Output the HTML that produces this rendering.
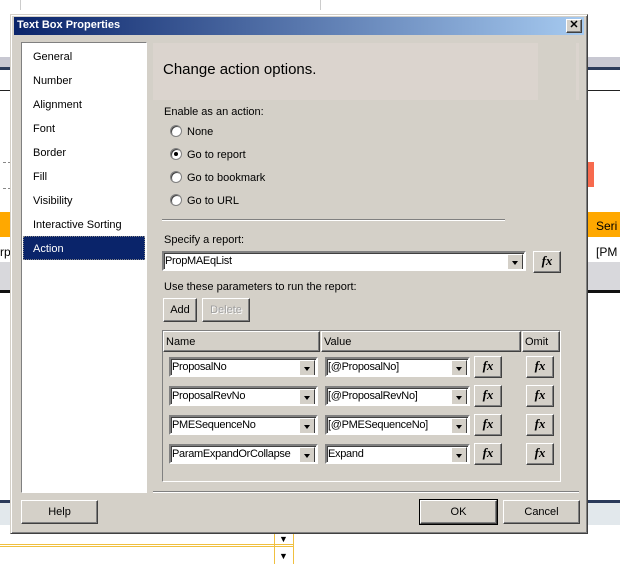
<!DOCTYPE html><html><head><style>
*{margin:0;padding:0;box-sizing:border-box}
body{width:620px;height:564px;position:relative;overflow:hidden;background:#fff;font-family:"Liberation Sans",Tahoma,sans-serif;font-size:11px;color:#000}
.a{position:absolute}
.t{position:absolute;white-space:nowrap;margin-top:1px}
.combo{position:absolute;height:20px;background:#fff;border:2px solid;border-color:#808080 #fff #fff #808080;box-shadow:inset 1px 1px 0 #404040;overflow:hidden}
.combo span{position:absolute;left:1px;top:2px;letter-spacing:-0.3px;white-space:nowrap}
.combo i{position:absolute;right:1px;top:1px;width:16px;height:16px;background:#d4d0c8;border:1px solid;border-color:#fff #404040 #404040 #fff}
.combo i:after{content:"";position:absolute;left:4px;top:6px;border:3.5px solid transparent;border-top:4px solid #000}
.btn{position:absolute;background:#d4d0c8;border:1px solid;border-color:#fff #404040 #404040 #fff;box-shadow:inset -1px -1px 0 #808080;text-align:center}
.fx{font-family:"Liberation Serif",serif;font-style:italic;font-weight:bold;font-size:13px;line-height:18px}
.rb{position:absolute;width:12px;height:12px;border-radius:50%;background:#fff;border:1px solid #808080;box-shadow:inset 1px 1px 0 #404040}
</style></head><body>
<div class="a" style="left:20px;top:0;width:1px;height:10px;background:#ccc"></div>
<div class="a" style="left:320px;top:0;width:1px;height:10px;background:#ccc"></div>
<div class="a" style="left:0;top:57px;width:620px;height:10px;background:#c8c8d2"></div>
<div class="a" style="left:0;top:67px;width:620px;height:3px;background:#2a3a5a"></div>
<div class="a" style="left:0;top:90px;width:620px;height:1px;background:#222"></div>
<div class="a" style="left:3px;top:162px;width:8px;height:27px;border:1px dashed #888;border-left:none"></div>
<div class="a" style="left:588px;top:162px;width:6px;height:25px;background:#f76a4e"></div>
<div class="a" style="left:0;top:212px;width:620px;height:25px;background:#ffa800"></div>
<div class="a" style="left:0;top:237px;width:620px;height:25px;background:#fff"></div>
<div class="a" style="left:0;top:262px;width:620px;height:30px;background:#d8d8dc"></div>
<div class="a" style="left:0;top:290px;width:620px;height:3px;background:#111"></div>
<div class="t" style="left:596px;top:218px;font-size:12px">Seri</div>
<div class="t" style="left:596px;top:244px;font-size:12px">[PM</div>
<div class="t" style="left:0;top:244px;font-size:12px">rp</div>
<div class="a" style="left:0;top:500px;width:620px;height:3px;background:#2a3a5a"></div>
<div class="a" style="left:0;top:503px;width:620px;height:22px;background:#e2e8ec"></div>
<div class="a" style="left:0;top:544px;width:294px;height:1px;background:#f0c040"></div>
<div class="a" style="left:0;top:546px;width:294px;height:1px;background:#f0c040"></div>
<div class="a" style="left:274px;top:534px;width:1px;height:30px;background:#f0c040"></div>
<div class="a" style="left:293px;top:534px;width:1px;height:30px;background:#f0c040"></div>
<div class="t" style="left:279px;top:533px;font-size:9px">▼</div>
<div class="t" style="left:279px;top:550px;font-size:9px">▼</div>
<div class="a" style="left:10px;top:14px;width:578px;height:520px;background:#d4d0c8;border:1px solid;border-color:#d4d0c8 #404040 #404040 #d4d0c8;box-shadow:inset 1px 1px 0 #fff,inset -1px -1px 0 #808080"></div>
<div class="a" style="left:14px;top:17px;width:570px;height:18px;background:linear-gradient(90deg,#0a246a,#a6caf0)"></div>
<div class="t" style="left:17px;top:18px;color:#fff;font-weight:bold;font-size:11px">Text Box Properties</div>
<div class="btn" style="left:566px;top:19px;width:16px;height:14px;font-size:11px;font-weight:bold;line-height:11px">✕</div>
<div class="a" style="left:21px;top:42px;width:126px;height:451px;background:#fff;border:1px solid;border-color:#808080 #fff #fff #808080"></div>
<div class="t" style="left:33px;top:50px">General</div>
<div class="t" style="left:33px;top:74px">Number</div>
<div class="t" style="left:33px;top:98px">Alignment</div>
<div class="t" style="left:33px;top:122px">Font</div>
<div class="t" style="left:33px;top:146px">Border</div>
<div class="t" style="left:33px;top:170px">Fill</div>
<div class="t" style="left:33px;top:194px">Visibility</div>
<div class="t" style="left:33px;top:218px">Interactive Sorting</div>
<div class="a" style="left:23px;top:236px;width:122px;height:24px;background:#0a246a;border:1px dotted #888"></div>
<div class="t" style="left:33px;top:242px;color:#fff">Action</div>
<div class="a" style="left:153px;top:43px;width:426px;height:57px;background:#dbd4ce"></div>
<div class="a" style="left:538px;top:43px;width:38px;height:57px;background:#d4d0c8"></div>
<div class="t" style="left:163px;top:60px;font-size:15px">Change action options.</div>
<div class="t" style="left:164px;top:105px">Enable as an action:</div>
<div class="rb" style="left:170px;top:125px"></div><div class="t" style="left:187px;top:125px">None</div>
<div class="rb" style="left:170px;top:148px"></div><div class="a" style="left:174px;top:152px;width:4px;height:4px;background:#000;border-radius:50%"></div><div class="t" style="left:187px;top:148px">Go to report</div>
<div class="rb" style="left:170px;top:171px"></div><div class="t" style="left:187px;top:171px">Go to bookmark</div>
<div class="rb" style="left:170px;top:194px"></div><div class="t" style="left:187px;top:194px">Go to URL</div>
<div class="a" style="left:162px;top:219px;width:343px;height:2px;border-top:1px solid #808080;border-bottom:1px solid #fff"></div>
<div class="t" style="left:164px;top:233px">Specify a report:</div>
<div class="combo" style="left:162px;top:251px;width:364px"><span>PropMAEqList</span><i></i></div>
<div class="btn fx" style="left:533px;top:251px;width:28px;height:22px">fx</div>
<div class="t" style="left:164px;top:280px">Use these parameters to run the report:</div>
<div class="btn" style="left:163px;top:298px;width:34px;height:24px;line-height:22px">Add</div>
<div class="btn" style="left:202px;top:298px;width:48px;height:24px;line-height:22px;color:#a0a0a0;text-shadow:1px 1px 0 #fff">Delete</div>
<div class="a" style="left:162px;top:330px;width:399px;height:152px;border:1px solid;border-color:#808080 #fff #fff #808080"></div>
<div class="btn" style="left:163px;top:331px;width:157px;height:21px;text-align:left;padding-left:2px;line-height:20px">Name</div>
<div class="btn" style="left:321px;top:331px;width:200px;height:21px;text-align:left;padding-left:2px;line-height:20px">Value</div>
<div class="btn" style="left:522px;top:331px;width:38px;height:21px;text-align:left;padding-left:2px;line-height:20px">Omit</div>

<div class="combo" style="left:169px;top:357px;width:149px"><span>ProposalNo</span><i></i></div>
<div class="combo" style="left:325px;top:357px;width:145px"><span>[@ProposalNo]</span><i></i></div>
<div class="btn fx" style="left:474px;top:356px;width:28px;height:22px">fx</div>
<div class="btn fx" style="left:526px;top:356px;width:28px;height:22px">fx</div>

<div class="combo" style="left:169px;top:386px;width:149px"><span>ProposalRevNo</span><i></i></div>
<div class="combo" style="left:325px;top:386px;width:145px"><span>[@ProposalRevNo]</span><i></i></div>
<div class="btn fx" style="left:474px;top:385px;width:28px;height:22px">fx</div>
<div class="btn fx" style="left:526px;top:385px;width:28px;height:22px">fx</div>

<div class="combo" style="left:169px;top:415px;width:149px"><span>PMESequenceNo</span><i></i></div>
<div class="combo" style="left:325px;top:415px;width:145px"><span>[@PMESequenceNo]</span><i></i></div>
<div class="btn fx" style="left:474px;top:414px;width:28px;height:22px">fx</div>
<div class="btn fx" style="left:526px;top:414px;width:28px;height:22px">fx</div>

<div class="combo" style="left:169px;top:444px;width:149px"><span>ParamExpandOrCollapse</span><i></i></div>
<div class="combo" style="left:325px;top:444px;width:145px"><span>Expand</span><i></i></div>
<div class="btn fx" style="left:474px;top:443px;width:28px;height:22px">fx</div>
<div class="btn fx" style="left:526px;top:443px;width:28px;height:22px">fx</div>

<div class="a" style="left:153px;top:491px;width:426px;height:2px;border-top:1px solid #808080;border-bottom:1px solid #fff"></div>
<div class="btn" style="left:21px;top:500px;width:77px;height:24px;line-height:23px">Help</div>
<div class="btn" style="left:420px;top:500px;width:77px;height:24px;line-height:23px;outline:1px solid #000">OK</div>
<div class="btn" style="left:503px;top:500px;width:77px;height:24px;line-height:23px">Cancel</div>
</body></html>
